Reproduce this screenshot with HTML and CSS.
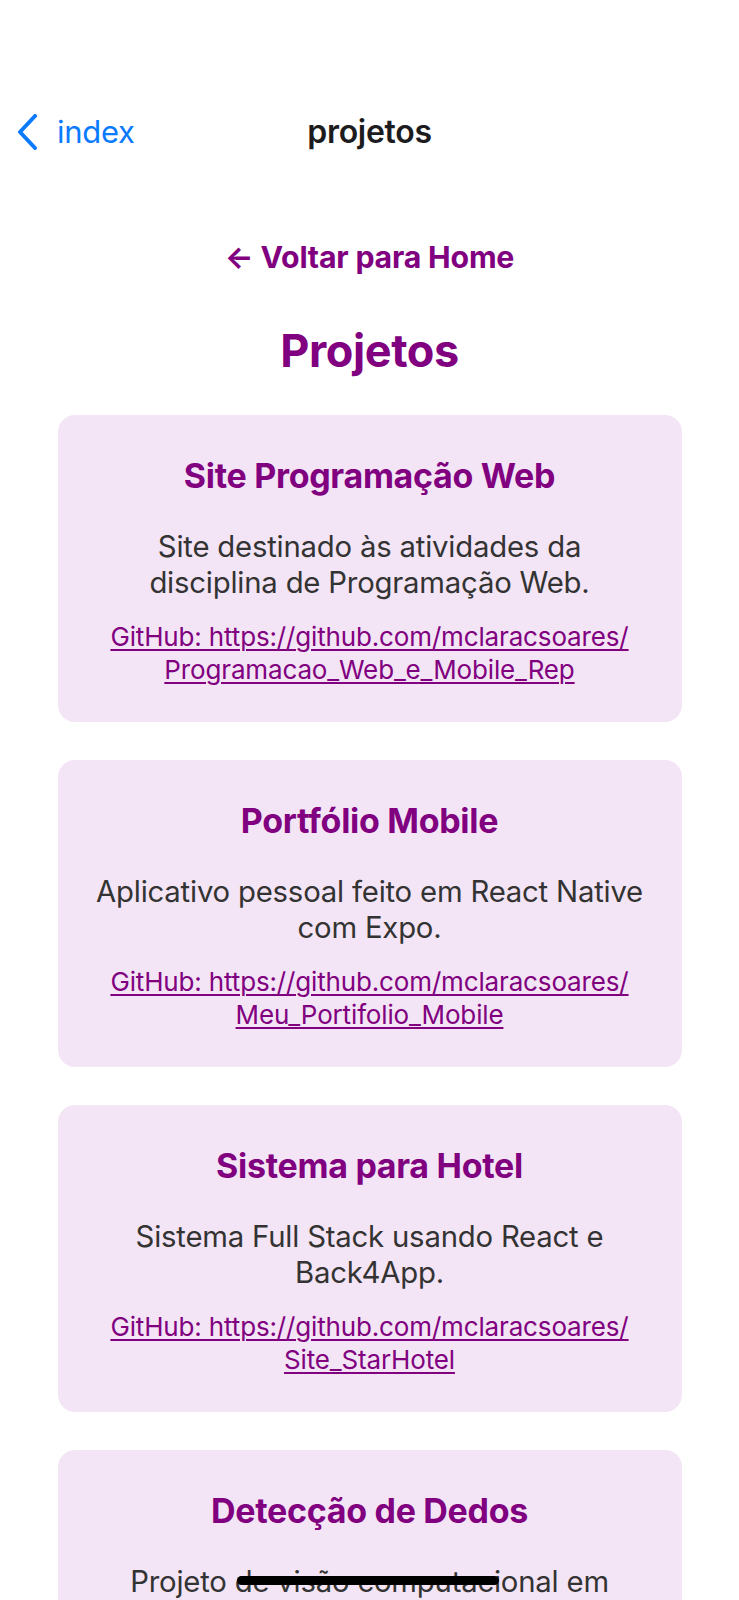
FILE: index.html
```html
<!DOCTYPE html>
<html lang="pt-BR">
<head>
<meta charset="utf-8">
<title>projetos</title>
<link rel="stylesheet" href="styles.css">
</head>
<body>
<header class="navbar">
  <a class="nav-back" href="#">
    <svg class="chev" width="22" height="36" viewBox="0 0 22 36"><path d="M19 2 L4 18 L19 34" fill="none" stroke="#0a7aff" stroke-width="4" stroke-linecap="round" stroke-linejoin="round"/></svg>
    <span>index</span>
  </a>
  <div class="nav-title">projetos</div>
</header>
<main class="content">
  <a class="back-home" href="#">← Voltar para Home</a>
  <h1 class="page-title">Projetos</h1>

  <section class="card">
    <h2 class="card-title">Site Programação Web</h2>
    <p class="card-desc">Site destinado às atividades da<br>disciplina de Programação Web.</p>
    <a class="card-link" href="#">GitHub: https://github.com/mclaracsoares/<wbr>Programacao_Web_e_Mobile_Rep</a>
  </section>

  <section class="card">
    <h2 class="card-title">Portfólio Mobile</h2>
    <p class="card-desc">Aplicativo pessoal feito em React Native<br>com Expo.</p>
    <a class="card-link" href="#">GitHub: https://github.com/mclaracsoares/<wbr>Meu_Portifolio_Mobile</a>
  </section>

  <section class="card">
    <h2 class="card-title">Sistema para Hotel</h2>
    <p class="card-desc">Sistema Full Stack usando React e<br>Back4App.</p>
    <a class="card-link" href="#">GitHub: https://github.com/mclaracsoares/<wbr>Site_StarHotel</a>
  </section>

  <section class="card">
    <h2 class="card-title">Detecção de Dedos</h2>
    <p class="card-desc">Projeto de visão computacional em<br>Python.</p>
    <a class="card-link" href="#">GitHub: https://github.com/mclaracsoares/<wbr>Deteccao_de_Dedos</a>
  </section>
</main>
<div class="home-indicator"></div>
</body>
</html>
```

FILE: styles.css
```css
* { box-sizing: border-box; }
html, body { margin: 0; padding: 0; background: #ffffff; }
body {
  font-family: Inter, "Noto Sans", "Liberation Sans", sans-serif;
  width: 739px;
  min-height: 1600px;
}
.navbar {
  position: relative;
  height: 173px;
  padding-top: 90px;
  display: flex;
  align-items: center;
}
.nav-back {
  display: flex;
  align-items: center;
  gap: 19px;
  padding-left: 16px;
  height: 83px;
  color: #0a7aff;
  text-decoration: none;
  font-size: 31px;
  letter-spacing: -0.3px;
}
.chev { display: block; }
.nav-title {
  position: absolute;
  left: 0; right: 0;
  top: 90px;
  height: 83px;
  display: flex;
  align-items: center;
  justify-content: center;
  font-size: 32px;
  font-weight: 600;
  color: #1c1c1e;
  letter-spacing: -0.3px;
  pointer-events: none;
}
.content {
  display: flex;
  flex-direction: column;
  align-items: center;
  padding: 66px 57px 40px;
}
.back-home {
  display: block;
  color: #800080;
  font-weight: 700;
  font-size: 30.3px;
  line-height: 36px;
  text-decoration: none;
  letter-spacing: -0.2px;
}
.page-title {
  margin: 49px 0 37px;
  color: #800080;
  font-size: 45px;
  line-height: 54px;
  font-weight: 700;
  letter-spacing: -0.4px;
}
.card {
  width: 624px;
  background: #f3e5f5;
  border-radius: 17px;
  padding: 38px 16px 36px;
  margin-bottom: 38px;
  text-align: center;
}
.card-title {
  margin: 0;
  color: #800080;
  font-size: 34px;
  line-height: 45px;
  font-weight: 700;
  letter-spacing: -0.3px;
}
.card-desc {
  margin: 31px 0 19px;
  color: #333333;
  font-size: 29.3px;
  line-height: 36px;
  letter-spacing: -0.2px;
}
.card-link {
  display: block;
  color: #800080;
  font-size: 26px;
  line-height: 33px;
  text-decoration: underline;
  text-underline-offset: 3px;
  text-decoration-thickness: 1.5px;
  letter-spacing: -0.15px;
}
.home-indicator {
  position: fixed;
  left: 237px;
  top: 1576px;
  width: 262px;
  height: 9px;
  border-radius: 5px;
  background: #000000;
}
```
